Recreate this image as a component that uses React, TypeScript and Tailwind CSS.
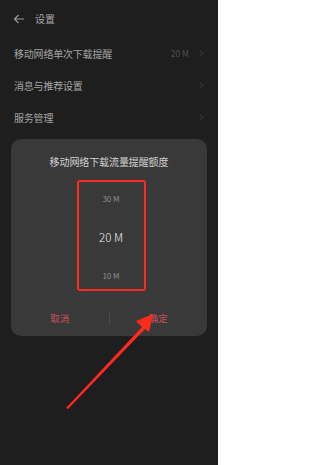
import { ChevronRight } from "lucide-react";

const rows = [
  { title: "移动网络单次下载提醒", value: "20 M" },
  { title: "消息与推荐设置" },
  { title: "服务管理" },
];

export default function App() {
  return (
    <div
      className="relative w-[218px] h-[465px] overflow-hidden bg-[#1e1e1e]"
      style={{ fontFamily: '"Noto Sans CJK SC", "Noto Sans", sans-serif' }}
    >
      {/* Header */}
      <div className="h-[37px] flex items-center pl-[13px]">
        <svg width="12" height="10" viewBox="0 0 12 10" fill="none" stroke="#9a9a9a" strokeWidth="1.2">
          <path d="M11 5H1.5M5.5 1L1.5 5l4 4" />
        </svg>
        <span className="ml-[10px] text-[10px] text-[#a8a8a8]">设置</span>
      </div>

      {/* Settings rows */}
      {rows.map((row) => (
        <div key={row.title} className="h-[32px] flex items-center pl-[14px] pr-[11px]">
          <span className="text-[10px] text-[#a4a4a4] tracking-[-0.2px]">{row.title}</span>
          {row.value && <span className="ml-auto text-[8.5px] text-[#4e4e4e]">{row.value}</span>}
          <ChevronRight
            className={row.value ? "ml-[7px]" : "ml-auto"}
            size={11}
            color="#5a5a5a"
            strokeWidth={1.3}
          />
        </div>
      ))}

      {/* Dialog */}
      <div className="mt-[6px] mx-[11px] h-[197px] rounded-[10px] bg-[#393939] flex flex-col items-center">
        <div className="mt-[15px] text-[10px] text-[#d2d2d2] tracking-[-0.1px]">移动网络下载流量提醒额度</div>
        <div className="mt-[11px] ml-[4px] w-[69px] h-[111px] border-2 border-[#ff2a1f] rounded-[3px] flex flex-col items-center">
          <div className="mt-[11px] text-[8px] text-[#8e8e8e]">30 M</div>
          <div className="mt-[24px] text-[11.5px] font-light text-[#f0f0f0]">20 M</div>
          <div className="mt-[24px] text-[8px] text-[#8e8e8e]">10 M</div>
        </div>
        <div className="mt-[20px] w-full flex items-center">
          <div className="flex-1 text-center text-[9.5px] text-[#c9505c]">取消</div>
          <div className="w-px h-[13px] bg-[#4c4c4c]" />
          <div className="flex-1 text-center text-[9.5px] text-[#c9505c]">确定</div>
        </div>
      </div>

      {/* Annotation arrow */}
      <svg className="absolute left-0 top-0" width="218" height="465" viewBox="0 0 218 465">
        <path d="M66 408 L142 327 L136 321 L153 314 L149 332 L145 329 L68 409 Z" fill="#ff2a1f" />
      </svg>
    </div>
  );
}
